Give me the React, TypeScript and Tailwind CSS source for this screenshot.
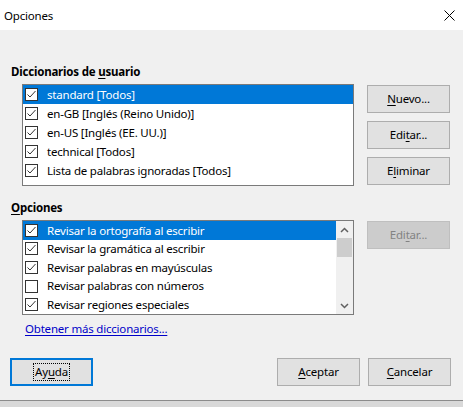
import React from "react";

function Check({ checked }: { checked: boolean }) {
  return (
    <span className="w-[13px] h-[13px] border border-[#333333] bg-white flex items-center justify-center shrink-0">
      {checked && (
        <svg width="11" height="11" viewBox="0 0 11 11">
          <polyline points="1.5,5.5 4,8 9.5,2" fill="none" stroke="#333333" strokeWidth="1" />
        </svg>
      )}
    </span>
  );
}

function Row({ label, checked, selected }: { label: string; checked: boolean; selected?: boolean }) {
  return (
    <div
      className={`h-[19px] flex items-center pl-[2px] gap-[9px] whitespace-nowrap ${
        selected ? "bg-[#0078d7] text-white" : "text-black"
      }`}
    >
      <Check checked={checked} />
      <span>{label}</span>
    </div>
  );
}

function Btn({ children, disabled, focused }: { children: React.ReactNode; disabled?: boolean; focused?: boolean }) {
  const base = "w-[83px] h-[28px] flex items-center justify-center shrink-0";
  if (disabled)
    return <div className={`${base} bg-[#cccccc] border border-[#bfbfbf] text-[#838383]`}>{children}</div>;
  if (focused)
    return (
      <div className={`${base} bg-[#e1e1e1] border-2 border-[#0078d7]`}>
        <span className="outline outline-1 outline-dotted outline-black px-[1px] leading-[16px]">{children}</span>
      </div>
    );
  return <div className={`${base} bg-[#e1e1e1] border border-[#adadad]`}>{children}</div>;
}

const U = ({ children }: { children: React.ReactNode }) => (
  <span className="underline underline-offset-[2px]">{children}</span>
);

export default function App() {
  return (
    <div className="w-[463px] h-[407px] bg-[#f0f0f0] font-['Noto_Sans',sans-serif] text-[11.5px] tracking-[-0.2px] text-black flex flex-col overflow-hidden">
      <div className="h-[30px] bg-white flex items-center justify-between pl-[4px] pr-[8px] shrink-0">
        <span className="mt-[1px]">Opciones</span>
        <svg width="11" height="11" viewBox="0 0 11 11">
          <path d="M0.5 0.5 L10.5 10.5 M10.5 0.5 L0.5 10.5" stroke="#000" strokeWidth="1" />
        </svg>
      </div>
      <div className="flex-1 flex flex-col pl-[11px]">
        <div className="mt-[34px] font-bold leading-[16px]">
          Diccionarios de <U>u</U>suario
        </div>
        <div className="flex mt-[4px]">
          <div className="ml-[11px] w-[332px] h-[102px] border border-[#7a7a7a] bg-white">
            <Row label="standard [Todos]" checked selected />
            <Row label="en-GB [Inglés (Reino Unido)]" checked />
            <Row label="en-US [Inglés (EE. UU.)]" checked />
            <Row label="technical [Todos]" checked />
            <Row label="Lista de palabras ignoradas [Todos]" checked />
          </div>
          <div className="ml-[13px] mt-[1px] flex flex-col gap-[8px]">
            <Btn>
              <U>N</U>uevo...
            </Btn>
            <Btn>
              Edi<U>t</U>ar...
            </Btn>
            <Btn>
              E<U>l</U>iminar
            </Btn>
          </div>
        </div>
        <div className="mt-[14px] font-bold leading-[16px]">
          <U>O</U>pciones
        </div>
        <div className="flex mt-[4px]">
          <div className="ml-[11px] w-[332px] h-[95px] border border-[#7a7a7a] bg-white flex overflow-hidden">
            <div className="flex-1 flex flex-col overflow-hidden">
              <Row label="Revisar la ortografía al escribir" checked selected />
              <Row label="Revisar la gramática al escribir" checked />
              <Row label="Revisar palabras en mayúsculas" checked />
              <Row label="Revisar palabras con números" checked={false} />
              <Row label="Revisar regiones especiales" checked />
            </div>
            <div className="w-[17px] bg-[#f0f0f0] flex flex-col items-center">
              <div className="h-[17px] w-full flex items-center justify-center">
                <svg width="9" height="6" viewBox="0 0 9 6">
                  <polyline points="1,5 4.5,1.5 8,5" fill="none" stroke="#606060" strokeWidth="1.5" />
                </svg>
              </div>
              <div className="w-[15px] h-[19px] bg-[#cdcdcd]" />
              <div className="flex-1" />
              <div className="h-[17px] w-full flex items-center justify-center">
                <svg width="9" height="6" viewBox="0 0 9 6">
                  <polyline points="1,1 4.5,4.5 8,1" fill="none" stroke="#606060" strokeWidth="1.5" />
                </svg>
              </div>
            </div>
          </div>
          <div className="ml-[13px] mt-[1px]">
            <Btn disabled>
              Edi<U>t</U>ar...
            </Btn>
          </div>
        </div>
        <div className="mt-[6px] ml-[14px] text-[#0000c8] underline underline-offset-[2px] leading-[16px]">
          Obtener más diccionarios...
        </div>
        <div className="mt-[21px] flex pr-[12px]">
          <div className="-ml-[1px]">
            <Btn focused>
              Ay<U>u</U>da
            </Btn>
          </div>
          <div className="flex-1" />
          <div className="flex gap-[8px]">
            <Btn>
              <U>A</U>ceptar
            </Btn>
            <Btn>
              <U>C</U>ancelar
            </Btn>
          </div>
        </div>
      </div>
      <div className="h-px bg-[#8c8c8c] shrink-0" />
      <div className="h-[6px] bg-[#d9d9d9] shrink-0" />
    </div>
  );
}
